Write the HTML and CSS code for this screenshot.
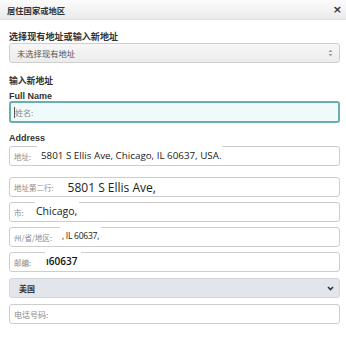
FILE: index.html
```html
<!DOCTYPE html>
<html lang="zh">
<head>
<meta charset="utf-8">
<link rel="stylesheet" href="styles.css">
</head>
<body>
<div class="header">
  <span class="title">居住国家或地区</span>
  <span class="close">×</span>
</div>
<div class="form">
  <div class="label cn l1">选择现有地址或输入新地址</div>
  <div class="select grey-grad">
    <span class="sel-text">未选择现有地址</span>
    <svg class="updown" width="5" height="8" viewBox="0 0 5 8"><path d="M0.5 3 L2.5 0.8 L4.5 3 Z M0.5 5 L2.5 7.2 L4.5 5 Z" fill="#999"/></svg>
  </div>
  <div class="label cn l2">输入新地址</div>
  <div class="label en l3">Full Name</div>
  <div class="field focus"><span class="caret"></span><span class="ph">姓名:</span></div>
  <div class="label en l4">Address</div>
  <div class="field f-addr">
    <span class="ph">地址:</span>
    <span class="ov ov-addr">5801 S Ellis Ave, Chicago, IL 60637, USA.</span>
  </div>
  <div class="field f-row2">
    <span class="ph">地址第二行:</span>
    <span class="val big">5801 S Ellis Ave,</span>
  </div>
  <div class="field f-gap">
    <span class="ph">市:</span>
    <span class="ov ov-city">Chicago,</span>
  </div>
  <div class="field f-gap">
    <span class="ph">州/省/地区:</span>
    <span class="ov ov-state">, IL 60637,</span>
  </div>
  <div class="field f-gap">
    <span class="ph">邮编:</span>
    <span class="ov ov-zip">ı60637</span>
  </div>
  <div class="select country">
    <span class="sel-text dark">美国</span>
    <svg class="chev" width="7" height="5" viewBox="0 0 7 5"><path d="M1 1 L3.5 3.6 L6 1" fill="none" stroke="#333" stroke-width="1.6"/></svg>
  </div>
  <div class="field f-phone"><span class="ph">电话号码:</span></div>
</div>
</body>
</html>
```
FILE: styles.css
```css
html, body {
  margin: 0;
  padding: 0;
  background: #fff;
  width: 346px;
  height: 339px;
  overflow: hidden;
}
body {
  font-family: "Liberation Sans", "Noto Sans CJK SC", sans-serif;
  color: #333;
}
.header {
  height: 20px;
  box-sizing: border-box;
  background: linear-gradient(#fbfbfb, #ebebeb);
  border-bottom: 1px solid #e0e0e0;
  display: flex;
  align-items: center;
  justify-content: space-between;
  padding: 0 4px 0 7px;
}
.title {
  font-family: "Noto Sans CJK SC", sans-serif;
  font-weight: 700;
  font-size: 8.3px;
  color: #333;
  line-height: 10px;
}
.close {
  font-family: "DejaVu Sans", sans-serif;
  font-weight: 700;
  font-size: 11px;
  color: #333;
  line-height: 10px;
}
.form {
  display: flex;
  flex-direction: column;
  padding: 0 6px 0 9px;
}
.label {
  font-weight: 700;
  color: #333;
}
.cn {
  font-family: "Noto Sans CJK SC", sans-serif;
  font-size: 9px;
  line-height: 12px;
}
.en {
  font-family: "Liberation Sans", sans-serif;
  font-size: 9px;
  line-height: 10px;
}
.l1 { margin-top: 10px; margin-bottom: 1px; font-size: 9.1px; }
.l2 { margin-top: 12px; font-size: 8.8px; }
.l3 { margin-top: 4px; }
.l4 { margin-top: 10px; margin-bottom: 3px; }
.select {
  height: 20px;
  box-sizing: border-box;
  border: 1px solid #cfcfcf;
  border-radius: 3px;
  display: flex;
  align-items: center;
  justify-content: space-between;
  padding: 0 6px 0 7px;
}
.grey-grad {
  background: linear-gradient(#f7f7f7, #ececec);
}
.sel-text {
  font-family: "Noto Sans CJK SC", sans-serif;
  font-size: 8.3px;
  color: #555;
}
.sel-text.dark {
  color: #333;
  font-weight: 700;
  font-size: 8px;
  margin-left: 2px;
}
.country {
  background: #e2e5e9;
  border-color: #d4d7db;
  margin-top: 6px;
  padding-right: 5px;
}
.field {
  position: relative;
  height: 20px;
  box-sizing: border-box;
  border: 1px solid #cdcdcd;
  border-radius: 3px;
  background: #fff;
  display: flex;
  align-items: center;
  padding-left: 4px;
}
.field.focus {
  height: 22px;
  border: 2px solid #6aaeae;
  background: #effafa;
  padding-left: 3px;
}
.caret {
  width: 1px;
  height: 11px;
  background: #555;
}
.ph {
  font-family: "Noto Sans CJK SC", sans-serif;
  font-size: 7.5px;
  color: #8a8a8a;
  white-space: nowrap;
}
.focus .ph { font-size: 8px; }
.f-row2 { margin-top: 11px; }
.f-gap { margin-top: 5px; }
.f-phone { margin-top: 6px; }
.f-phone .ph { font-size: 8px; }
.val {
  font-family: "Open Sans", sans-serif;
  color: #222;
  white-space: nowrap;
}
.big {
  font-size: 12px;
  margin-left: 14px;
}
.ov {
  position: absolute;
  top: -3px;
  bottom: 1px;
  background: #fff;
  display: flex;
  align-items: center;
  font-family: "Open Sans", sans-serif;
  color: #222;
  white-space: nowrap;
  padding-top: 2px;
  box-sizing: border-box;
}
.ov-addr {
  left: 27px;
  width: 185px;
  padding-left: 4px;
  font-size: 9.8px;
}
.ov-city {
  left: 25px;
  width: 44px;
  padding-left: 1px;
  font-size: 10.5px;
}
.ov-state {
  left: 50px;
  width: 41px;
  padding-left: 2px;
  font-size: 8.6px;
  letter-spacing: -0.3px;
}
.ov-zip {
  left: 35px;
  width: 36px;
  padding-left: 1px;
  font-size: 10px;
  font-weight: 600;
  color: #111;
}
```
